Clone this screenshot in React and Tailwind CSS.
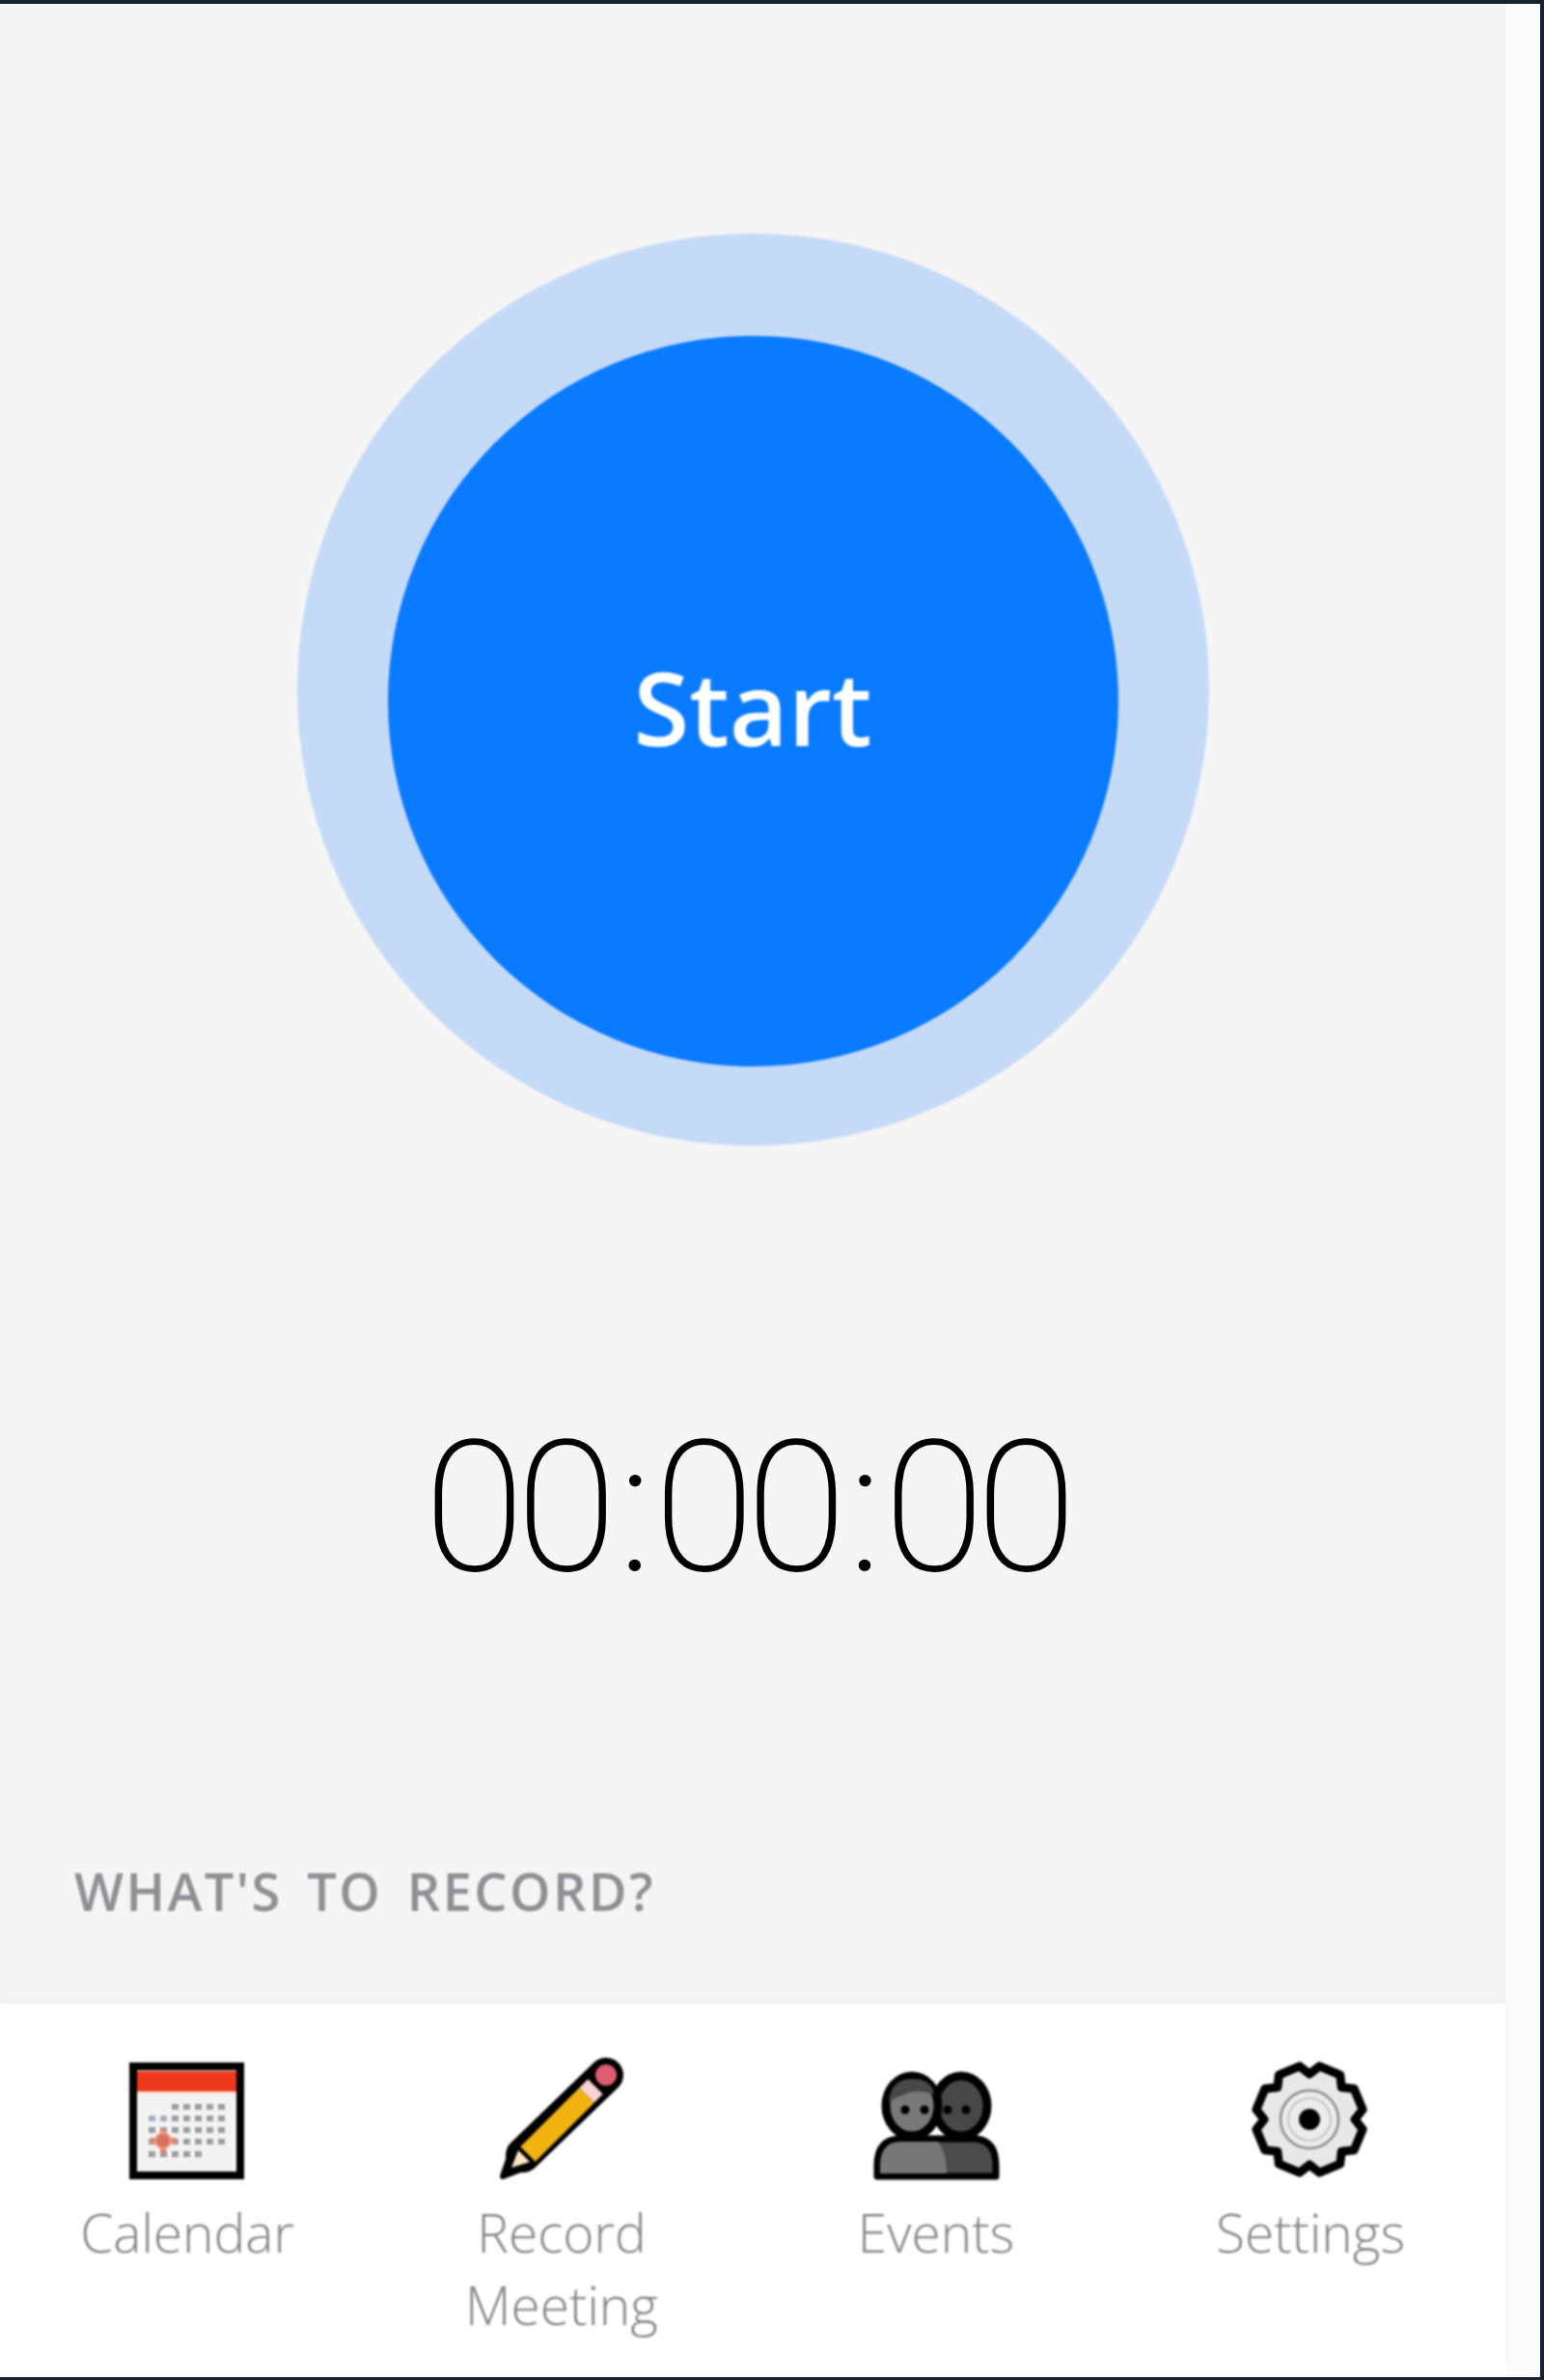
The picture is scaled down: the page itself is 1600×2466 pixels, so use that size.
const gearPoints = () => {
  const pts = [];
  for (let k = 0; k < 8; k++) {
    const a = 22.5 + 45 * k;
    [[-22.5, 47], [-12, 56], [12, 56]].forEach(([d, r]) => {
      const t = ((a + d) * Math.PI) / 180;
      pts.push(`${(88 + r * Math.cos(t)).toFixed(1)},${(76 + r * Math.sin(t)).toFixed(1)}`);
    });
  }
  return pts.join(' ');
};

const CalendarIcon = () => {
  const rows = [
    [82, 63, 5], [58, 75, 7], [58, 87, 7], [58, 99, 7], [58, 112, 5],
  ];
  return (
    <svg width="180" height="150" viewBox="5 0 180 150">
      <rect x="39" y="21" width="111" height="113" fill="#f3f3f3" stroke="#000" strokeWidth="8" />
      <rect x="43" y="26" width="103" height="21" fill="#ee3a1c" />
      <rect x="43" y="47" width="103" height="3" fill="#fbe3d8" />
      {rows.map(([start, y, n]) =>
        Array.from({ length: n }).map((_, i) => (
          <rect key={`${y}-${i}`} x={start + i * 12 - 3} y={y - 3} width="7" height="6" fill={i < 2 && y === 75 ? '#a4adc2' : '#9c9c9c'} />
        ))
      )}
      <path d="M70 86v25M57 98h26" stroke="#e2816b" strokeWidth="6" />
      <circle cx="70" cy="98" r="8" fill="#d9715c" stroke="#f0a08c" strokeWidth="2" />
    </svg>
  );
};

const PencilIcon = () => (
  <svg width="180" height="150" viewBox="-8 0 180 150">
    <path d="M21 135 L31 106 L50 124 Z" fill="#000" stroke="#000" strokeWidth="6" strokeLinejoin="round" />
    <path d="M42 113 L128 30" stroke="#000" strokeWidth="36" strokeLinecap="round" />
    <path d="M30 126 L37 108 L49 120 Z" fill="#fbe6c4" />
    <path d="M47 112 L108 51" stroke="#f2b20f" strokeWidth="22" />
    <path d="M108 51 L117 42" stroke="#f8d3d0" strokeWidth="22" />
    <circle cx="128" cy="30" r="11" fill="#dc5c70" />
  </svg>
);

const EventsIcon = () => (
  <svg width="180" height="150" viewBox="-8 0 180 150">
    <path d="M21 135 V124 Q21 96 46 96 H120 Q144 96 144 124 V135 Z" fill="#4b4b4b" stroke="#000" strokeWidth="7" strokeLinejoin="round" />
    <path d="M24 132 V124 Q24 99 46 99 H84 Q93 110 93 132 Z" fill="#777" />
    <ellipse cx="108" cy="62" rx="27" ry="31" fill="#484848" stroke="#000" strokeWidth="9" />
    <ellipse cx="57" cy="62" rx="27" ry="31" fill="#787878" stroke="#000" strokeWidth="9" />
    <path d="M33 58 Q35 34 57 34 Q78 34 80 50 Q60 44 50 50 Q42 52 33 58 Z" fill="#484848" />
    <circle cx="50" cy="66" r="4.5" fill="#000" />
    <circle cx="70" cy="66" r="4.5" fill="#000" />
    <circle cx="94" cy="66" r="4.5" fill="#000" />
    <circle cx="113" cy="66" r="4.5" fill="#000" />
  </svg>
);

const SettingsIcon = () => (
  <svg width="180" height="150" viewBox="-1 0 180 150">
    <polygon points={gearPoints()} fill="#e8e8e8" stroke="#000" strokeWidth="9" strokeLinejoin="round" />
    <circle cx="88" cy="76" r="30" fill="#ececec" stroke="#8a8a8a" strokeWidth="2.5" />
    <circle cx="88" cy="76" r="22" fill="none" stroke="#c4c4c4" strokeWidth="2" />
    <circle cx="88" cy="76" r="11" fill="#000" />
  </svg>
);

const navItems = [
  { label: 'Calendar', Icon: CalendarIcon },
  { label: 'Record Meeting', Icon: PencilIcon },
  { label: 'Events', Icon: EventsIcon },
  { label: 'Settings', Icon: SettingsIcon },
];

export default function App() {
  return (
    <div className="h-[2466px] w-[1600px] overflow-hidden border-t-4 border-r-4 border-b-[3px] border-[#1a2230] bg-[#fbfbfb] font-['Open_Sans',sans-serif]">
      <div className="flex h-full w-[1560px] flex-col bg-[#f5f5f5]">
        <div className="flex justify-center pt-[238px] blur-[0.8px]">
          <div className="flex h-[945px] w-[945px] justify-center rounded-full bg-[#c5daf7] pt-[106px]">
            <button className="flex h-[757px] w-[757px] items-center justify-center rounded-full bg-[#0a7bff] pt-[12px] text-[105px] font-semibold text-white">
              Start
            </button>
          </div>
        </div>

        <div className="mt-[280px] pr-[14px] text-center font-['Roboto',sans-serif] text-[190px] leading-[190px] font-extralight tracking-[-9px] text-black blur-[0.6px]">
          00<span className="px-[10px]">:</span>00<span className="px-[10px]">:</span>00
        </div>

        <h3 className="mt-[272px] pl-[77px] text-[54px] leading-[60px] font-semibold tracking-[2.5px] text-[#8e8e93] [word-spacing:9px] blur-[0.8px]">WHAT'S TO RECORD?</h3>

        <nav className="mt-auto grid h-[387px] grid-cols-[repeat(4,388px)] items-start bg-white pt-[44px] shadow-[0_-6px_10px_rgba(0,0,0,0.025)]">
          {navItems.map(({ label, Icon }) => (
            <div key={label} className="flex flex-col items-center text-center blur-[0.8px]">
              <Icon />
              <span className="mt-[5px] w-[240px] text-[55px] leading-[75px] font-light text-[#858585]">{label}</span>
            </div>
          ))}
        </nav>
      </div>
    </div>
  );
}
